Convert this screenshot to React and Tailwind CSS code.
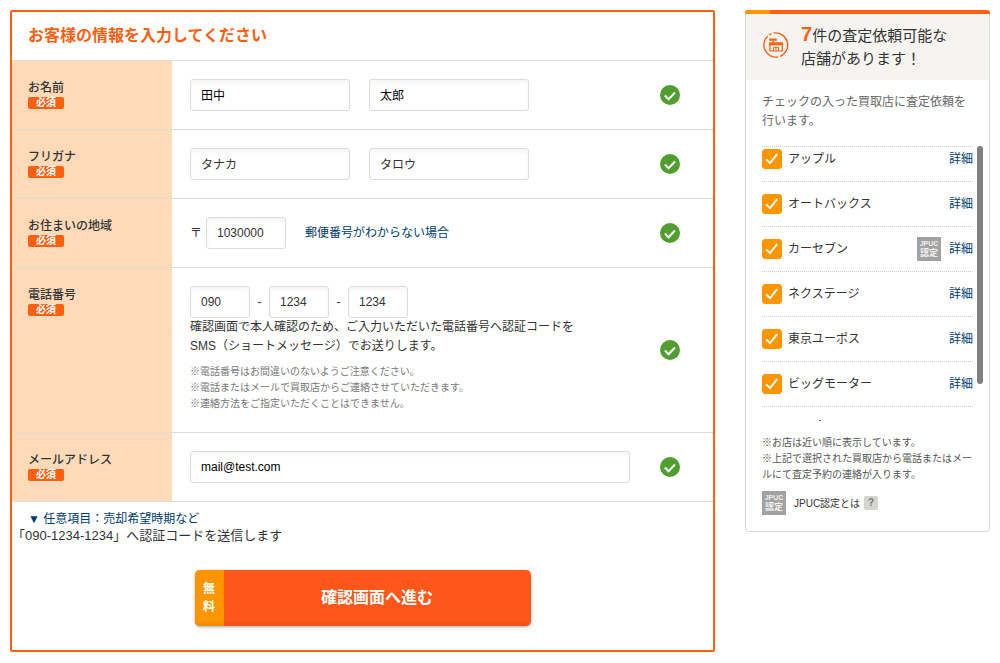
import { useState } from "react";

const shops = [
  { id: "apple", name: "アップル", jpuc: false },
  { id: "autobacs", name: "オートバックス", jpuc: false },
  { id: "carseven", name: "カーセブン", jpuc: true },
  { id: "nextage", name: "ネクステージ", jpuc: false },
  { id: "upos", name: "東京ユーポス", jpuc: false },
  { id: "bigmotor", name: "ビッグモーター", jpuc: false },
];

const inputClass =
  "h-8 rounded-[3px] border border-[#ddddd8] bg-white px-[10px] text-xs shadow-[inset_0_3px_4px_rgba(0,0,0,0.04)] outline-none";

function CheckMark() {
  return (
    <svg viewBox="0 0 20 20" className="h-5 w-5 shrink-0" aria-hidden="true">
      <circle cx="10" cy="10" r="10" fill="#4f9e2f" />
      <path
        d="M4.9 10.4 8.6 14.2 15 7.5"
        fill="none"
        stroke="#fff"
        strokeWidth="2.1"
      />
    </svg>
  );
}

function ShopIcon() {
  return (
    <svg
      viewBox="0 0 26 26"
      className="mt-2 h-[26px] w-[26px] shrink-0"
      fill="none"
      stroke="#ff6010"
      aria-hidden="true"
    >
      <path d="M8.6 1.6A12.2 12.2 0 0 0 6 3" strokeWidth="1.4" />
      <path d="M4.6 4.2A12.2 12.2 0 0 0 15 25" strokeWidth="1.4" />
      <path d="M10.6 1a12.2 12.2 0 0 1 6.4 23.4" strokeWidth="1.4" />
      <path d="M6.2 6.4h7.6v2.4H6.2z" fill="#ff6010" stroke="none" />
      <path d="M9.4 8.8h1.4v1.6H9.4z" fill="#ff6010" stroke="none" />
      <path d="M6.2 10.2h13.6l.6 3H5.6z" fill="#ff6010" stroke="none" />
      <path d="M7 13v6h12.2v-6" strokeWidth="1.2" />
      <path d="M10.4 19v-3.6h5.2V19M13 15.4V19" strokeWidth="1" />
    </svg>
  );
}

function JpucBadge() {
  return (
    <span className="flex h-6 w-6 shrink-0 flex-col items-center justify-center bg-[#a2a2a2] font-bold text-[#f1f1f1]">
      <span className="text-[7px] leading-[8px]">JPUC</span>
      <span className="text-[9px] leading-[10px]">認定</span>
    </span>
  );
}

function FormRow({ label, htmlFor, children }) {
  return (
    <div className="flex border-t border-[#dcdcd8]">
      <div className="w-40 shrink-0 bg-[#ffdab9] px-4 pt-[18px]">
        <label
          htmlFor={htmlFor}
          className="block text-xs leading-[18px] font-medium"
        >
          {label}
          <span className="flex h-3 w-9 items-center justify-center rounded-[2px] bg-[#ff6010] text-[10px] leading-3 font-bold text-white">
            必須
          </span>
        </label>
      </div>
      <div className="min-w-0 flex-1 py-[18px] pl-[18px]">{children}</div>
      <div className="flex items-center pr-[33px]">
        <CheckMark />
      </div>
    </div>
  );
}

function ShopItem({ shop, checked, onToggle }) {
  return (
    <li className="flex h-[45px] items-center gap-2 border-b border-dotted border-[#ccc] text-xs">
      <label className="flex flex-1 items-center gap-[6px]">
        <span className="relative flex">
          <input
            type="checkbox"
            checked={checked}
            onChange={() => onToggle(shop.id)}
            className="h-5 w-5 appearance-none rounded-[3px] border border-[#ff9600] bg-white checked:bg-[#ff9600]"
          />
          <svg
            viewBox="0 0 20 20"
            className="pointer-events-none absolute inset-0 h-5 w-5"
            aria-hidden="true"
          >
            <path
              d="M4.2 10.4 8 14.1 15.2 5.2"
              fill="none"
              stroke="#fff"
              strokeWidth="2"
            />
          </svg>
        </span>
        {shop.name}
      </label>
      {shop.jpuc && <JpucBadge />}
      <a href="#detail" className="text-[#003b6b]">
        詳細
      </a>
    </li>
  );
}

function App() {
  const [selected, setSelected] = useState(shops.map((shop) => shop.id));

  const handleToggle = (id) => {
    setSelected((prev) =>
      prev.includes(id) ? prev.filter((item) => item !== id) : [...prev, id]
    );
  };

  return (
    <div className="flex items-start gap-[30px] bg-white p-[10px] font-['Liberation_Sans','Noto_Sans_CJK_JP',sans-serif] text-[#333]">
      <form
        onSubmit={(e) => e.preventDefault()}
        className="min-w-0 flex-1 rounded-[2px] border-2 border-[#ff6010]"
      >
        <h1 className="px-4 py-3 text-base leading-6 font-bold text-[#ff6010]">
          お客様の情報を入力してください
        </h1>

        <FormRow label="お名前" htmlFor="lastName">
          <div className="flex gap-[19px]">
            <input
              id="lastName"
              defaultValue="田中"
              className={`${inputClass} w-40 pb-[2px] text-black`}
            />
            <input
              aria-label="名"
              defaultValue="太郎"
              className={`${inputClass} w-40 pb-[2px] text-black`}
            />
          </div>
        </FormRow>

        <FormRow label="フリガナ" htmlFor="lastKana">
          <div className="flex gap-[19px]">
            <input
              id="lastKana"
              defaultValue="タナカ"
              className={`${inputClass} w-40 pb-[2px]`}
            />
            <input
              aria-label="メイ"
              defaultValue="タロウ"
              className={`${inputClass} w-40 pb-[2px]`}
            />
          </div>
        </FormRow>

        <FormRow label="お住まいの地域" htmlFor="zip">
          <div className="flex items-center text-xs">
            <span className="w-4">〒</span>
            <input
              id="zip"
              defaultValue="1030000"
              className={`${inputClass} w-20`}
            />
            <a href="#zip" className="ml-[19px] text-[#003b6b]">
              郵便番号がわからない場合
            </a>
          </div>
        </FormRow>

        <FormRow label="電話番号" htmlFor="tel1">
          <div className="flex items-center text-xs">
            <input
              id="tel1"
              defaultValue="090"
              className={`${inputClass} w-[60px]`}
            />
            <span className="w-[19px] text-center">-</span>
            <input
              aria-label="電話番号 市内局番"
              defaultValue="1234"
              className={`${inputClass} w-[60px]`}
            />
            <span className="w-[19px] text-center">-</span>
            <input
              aria-label="電話番号 加入者番号"
              defaultValue="1234"
              className={`${inputClass} w-[60px]`}
            />
          </div>
          <p className="text-xs leading-[19px]">
            確認画面で本人確認のため、ご入力いただいた電話番号へ認証コードを
            <br />
            SMS（ショートメッセージ）でお送りします。
          </p>
          <ul className="mt-2 pb-[2px] text-[10px] leading-4 text-[#777]">
            <li>※電話番号はお間違いのないようご注意ください。</li>
            <li>※電話またはメールで買取店からご連絡させていただきます。</li>
            <li>※連絡方法をご指定いただくことはできません。</li>
          </ul>
        </FormRow>

        <FormRow label="メールアドレス" htmlFor="mail">
          <input
            id="mail"
            type="email"
            defaultValue="mail@test.com"
            className={`${inputClass} block w-full max-w-[440px] text-black`}
          />
        </FormRow>

        <div className="border-t border-[#dcdcd8] pt-2 pb-6">
          <a
            href="#option"
            className="block px-4 text-xs leading-[18px] text-[#003b6b]"
          >
            ▼ 任意項目：売却希望時期など
          </a>
          <p className="text-[13px] leading-4">
            「090-1234-1234」へ認証コードを送信します
          </p>
          <button
            type="submit"
            className="mx-auto mt-[26px] flex h-14 w-[336px] overflow-hidden rounded-[5px] bg-[#ff571a] font-bold text-white shadow-[0_1px_3px_rgba(0,0,0,0.35)]"
          >
            <span className="flex h-full w-[29px] items-center justify-center bg-[#ff9600] text-xs leading-[18px] shadow-[inset_0_-5px_5px_-3px_rgba(0,0,0,0.1)]">
              無
              <br />
              料
            </span>
            <span className="flex h-full flex-1 items-center justify-center text-base shadow-[inset_0_-5px_5px_-3px_rgba(0,0,0,0.1)]">
              確認画面へ進む
            </span>
          </button>
        </div>
      </form>

      <aside className="w-[245px] shrink-0 overflow-hidden rounded-[3px]">
        <div className="flex h-1 bg-[#ff6010]">
          <span className="w-[25px] bg-[#ff9600]" />
        </div>
        <div className="rounded-b-[3px] border border-t-0 border-[#d8d8d8]">
          <div className="flex items-start gap-3 bg-[#f5f4f0] px-[17px] py-[10px]">
            <ShopIcon />
            <h2 className="text-[15px] leading-[23px]">
              <strong className="text-xl leading-none text-[#ff6010]">7</strong>
              件の査定依頼可能な
              <br />
              店舗があります！
            </h2>
          </div>
          <div className="px-4 pt-[13px] pb-4">
            <p className="text-xs leading-[19px] text-[#666]">
              チェックの入った買取店に査定依頼を行います。
            </p>
            <div className="relative mt-[15px] h-[275px] border-t border-dotted border-[#ccc]">
              <ul className="-mt-[10px]">
                {shops.map((shop) => (
                  <ShopItem
                    key={shop.id}
                    shop={shop}
                    checked={selected.includes(shop.id)}
                    onToggle={handleToggle}
                  />
                ))}
              </ul>
              {/* scroll thumb in the right margin of the list */}
              <span className="absolute -top-px -right-[10px] h-[238px] w-[6px] rounded-full bg-[#808080]" />
              {/* top of the next, cut off row */}
              <span className="absolute bottom-0 left-[57px] h-px w-[2px] bg-[#666]" />
            </div>
            <p className="mt-[14px] text-[10px] leading-4 text-[#555]">
              ※お店は近い順に表示しています。
              <br />
              ※上記で選択された買取店から電話またはメールにて査定予約の連絡が入ります。
            </p>
            <div className="mt-2 flex items-center text-[10px]">
              <JpucBadge />
              <span className="ml-2">JPUC認定とは</span>
              <button
                type="button"
                className="ml-1 h-[14px] w-[14px] rounded-[2px] bg-[#d5d5d0] text-center text-[10px] leading-[14px] font-bold text-[#777]"
              >
                ?
              </button>
            </div>
          </div>
        </div>
      </aside>
    </div>
  );
}

export default App;
